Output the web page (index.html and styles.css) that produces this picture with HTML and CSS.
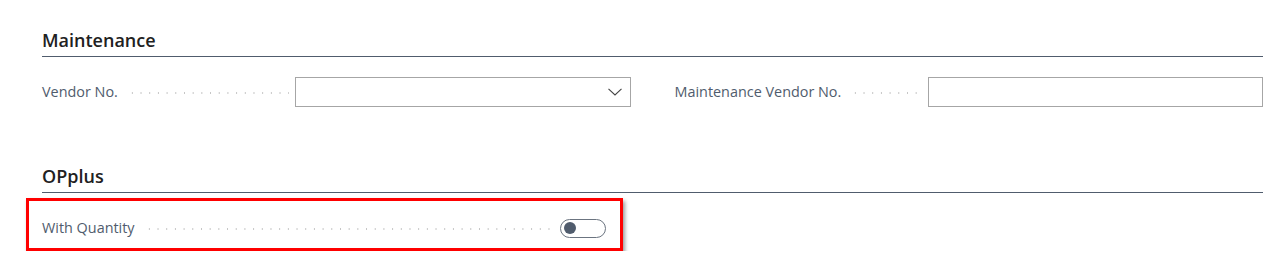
FILE: index.html
```html
<!DOCTYPE html>
<html lang="en">
<head>
<meta charset="utf-8">
<title>Card</title>
<link rel="stylesheet" href="styles.css">
</head>
<body>
<main class="page">
  <section class="group">
    <h2 class="group-title">Maintenance</h2>
    <div class="fields">
      <div class="field">
        <span class="field-label"><span class="label-text">Vendor No.</span><span class="leader"></span></span>
        <div class="input input-select">
          <svg class="chevron" width="14" height="8" viewBox="0 0 14 8" aria-hidden="true"><path d="M0.5 0.8 L7 7 L13.5 0.8" fill="none" stroke="#444" stroke-width="1.1"/></svg>
        </div>
      </div>
      <div class="field">
        <span class="field-label"><span class="label-text">Maintenance Vendor No.</span><span class="leader"></span></span>
        <div class="input"></div>
      </div>
    </div>
  </section>
  <section class="group group-opplus">
    <h2 class="group-title">OPplus</h2>
    <div class="highlight">
      <div class="field field-bool">
        <span class="field-label"><span class="label-text">With Quantity</span><span class="leader"></span></span>
        <span class="toggle"><span class="knob"></span></span>
      </div>
    </div>
  </section>
</main>
</body>
</html>
```
FILE: styles.css
```css
html, body {
  margin: 0;
  padding: 0;
  background: #ffffff;
}
body {
  font-family: "Open Sans", "Noto Sans", "Liberation Sans", sans-serif;
  color: #505c6d;
}
.page {
  padding: 31px 12px 0 42px;
}
.group-title {
  margin: 0;
  height: 25px;
  line-height: 18px;
  font-size: 18px;
  font-weight: 600;
  color: #212121;
  border-bottom: 1px solid #505c6d;
}
.fields {
  margin-top: 20px;
  display: grid;
  grid-template-columns: 1fr 1fr;
  column-gap: 44px;
}
.field {
  display: flex;
  align-items: center;
  height: 30px;
}
.field-label {
  width: 253px;
  flex: none;
  display: flex;
  align-items: center;
  font-size: 14.4px;
  line-height: 20px;
}
.label-text {
  white-space: nowrap;
  padding-right: 10px;
}
.leader {
  flex: 1;
  height: 2px;
  margin-top: 2px;
  margin-right: 6px;
  background-image: radial-gradient(circle, #c4c4c4 0.8px, transparent 1px);
  background-size: 8.7px 2px;
  background-repeat: repeat-x;
}
.input {
  flex: 1;
  box-sizing: border-box;
  height: 30px;
  border: 1px solid #a6a6a6;
  background: #fff;
  display: flex;
  align-items: center;
  justify-content: flex-end;
}
.chevron {
  margin-right: 8px;
  display: block;
}
.group-opplus {
  margin-top: 60px;
}
.highlight {
  margin: 5px 0 0 -16px;
  width: 578px;
  border: 3px solid #ff0000;
  padding: 12px 0 5px 13px;
  box-shadow: 2px 3px 4px rgba(0, 0, 0, 0.4);
}
.field-bool {
  width: 564px;
}
.field-bool .field-label {
  flex: 1;
  width: auto;
}
.field-bool .leader {
  margin-right: 4px;
}
.toggle {
  box-sizing: border-box;
  width: 46px;
  height: 19px;
  border: 1px solid #6b7480;
  border-radius: 10px;
  display: flex;
  align-items: center;
  padding-left: 3px;
  flex: none;
}
.knob {
  width: 12px;
  height: 12px;
  border-radius: 50%;
  background: #505c6d;
}
```
